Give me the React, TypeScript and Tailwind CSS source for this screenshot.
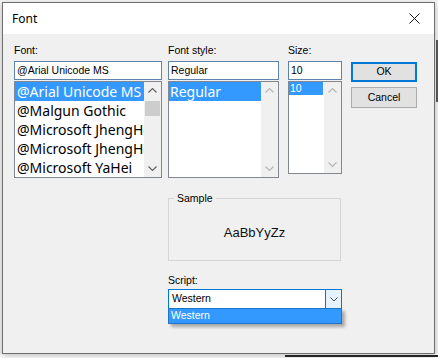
import React from "react";

const ui = "font-['Liberation_Sans',Arial,sans-serif] text-[10.5px] text-black";

function Chevron({ dir, color }: { dir: "up" | "down"; color: string }) {
  return (
    <svg width="9" height="5" viewBox="0 0 9 5">
      <path
        d={dir === "up" ? "M0.5 4.5 L4.5 0.5 L8.5 4.5" : "M0.5 0.5 L4.5 4.5 L8.5 0.5"}
        stroke={color}
        fill="none"
        strokeWidth="1.1"
      />
    </svg>
  );
}

function Scrollbar({ thumb, color }: { thumb?: boolean; color: string }) {
  return (
    <div className="w-[17px] h-full bg-[#f0f0f0] flex flex-col">
      <div className="h-[17px] flex items-center justify-center">
        <Chevron dir="up" color={color} />
      </div>
      <div className="flex-1 flex flex-col items-center">
        {thumb && <div className="w-[15px] h-[15px] mt-[2px] bg-[#cdcdcd]" />}
      </div>
      <div className="h-[17px] flex items-center justify-center">
        <Chevron dir="down" color={color} />
      </div>
    </div>
  );
}

function Edit({ value, w }: { value: string; w: string }) {
  return (
    <div
      className={`${w} h-[19px] mt-[3px] bg-white border border-[#5f83ab] flex items-center pl-[2px] ${ui} whitespace-nowrap overflow-hidden`}
    >
      {value}
    </div>
  );
}

function Label({ text }: { text: string }) {
  return <div className={`h-[15px] leading-[15px] ${ui}`}>{text}</div>;
}

const fonts = [
  "@Arial Unicode MS",
  "@Malgun Gothic",
  "@Microsoft JhengHei",
  "@Microsoft JhengHei UI",
  "@Microsoft YaHei",
];

export default function App() {
  return (
    <div className="relative w-[438px] h-[358px] bg-[#f3f3f3] pt-[2px] pl-[2px] overflow-hidden">
      {/* windows behind */}
      <div className="absolute right-0 top-[40px] w-[2px] h-[62px] bg-[#5a5a5a]" />
      <div className="absolute left-0 top-[354px] w-[438px] h-[4px] bg-white" />
      <div className="absolute left-[285px] top-[355px] w-[153px] h-[2px] bg-[#2a2a2a]" />

      <div className="relative w-[433px] h-[352px] border border-[#6f6f6f] shadow-[0_2px_6px_rgba(0,0,0,0.25)] flex flex-col bg-[#f0f0f0]">
        {/* title bar */}
        <div className="h-[31px] bg-white flex items-center justify-between pl-[9px] pr-[14px]">
          <span className="font-['Noto_Sans',sans-serif] text-[12px] text-black">Font</span>
          <svg width="11" height="11" viewBox="0 0 11 11">
            <path d="M0.5 0.5 L10.5 10.5 M10.5 0.5 L0.5 10.5" stroke="#111" strokeWidth="1" />
          </svg>
        </div>

        {/* body */}
        <div className="flex-1 flex pl-[11px] pt-[9px]">
          {/* font column */}
          <div className="w-[148px] flex flex-col">
            <Label text="Font:" />
            <Edit value="@Arial Unicode MS" w="w-[148px]" />
            <div className="mt-[1px] w-[148px] h-[97px] border border-[#828790] bg-white flex">
              <div className="flex-1 flex flex-col overflow-hidden">
                {fonts.map((f, i) => (
                  <div
                    key={f}
                    className={`h-[19px] leading-[19px] pl-[2px] whitespace-nowrap overflow-hidden font-['Noto_Sans',sans-serif] text-[14px] ${
                      i === 0 ? "bg-[#3399ff] text-white" : "text-black"
                    }`}
                  >
                    {f}
                  </div>
                ))}
              </div>
              <Scrollbar thumb color="#606060" />
            </div>
          </div>

          {/* right area */}
          <div className="ml-[6px] flex flex-col">
            <div className="flex">
              {/* font style */}
              <div className="w-[111px] flex flex-col">
                <Label text="Font style:" />
                <Edit value="Regular" w="w-[111px]" />
                <div className="mt-[1px] w-[111px] h-[97px] border border-[#828790] bg-white flex">
                  <div className="flex-1 flex flex-col">
                    <div className="h-[19px] leading-[19px] pl-[1px] bg-[#3399ff] text-white font-['Noto_Sans',sans-serif] text-[14px]">
                      Regular
                    </div>
                  </div>
                  <Scrollbar color="#b4b4b4" />
                </div>
              </div>

              {/* size */}
              <div className="ml-[9px] w-[54px] flex flex-col">
                <Label text="Size:" />
                <Edit value="10" w="w-[54px]" />
                <div className="mt-[1px] w-[54px] h-[93px] border border-[#828790] bg-white flex">
                  <div className="flex-1 flex flex-col">
                    <div className="w-[34px] h-[13px] leading-[13px] pl-[1px] bg-[#3399ff] text-white font-['Liberation_Sans',Arial,sans-serif] text-[10.5px]">
                      10
                    </div>
                  </div>
                  <Scrollbar color="#b4b4b4" />
                </div>
              </div>

              {/* buttons */}
              <div className="ml-[9px] w-[66px] flex flex-col">
                <div
                  className={`mt-[19px] h-[20px] bg-[#e1e1e1] border-2 border-[#0078d7] flex items-center justify-center ${ui}`}
                >
                  OK
                </div>
                <div
                  className={`mt-[5px] h-[21px] bg-[#e1e1e1] border border-[#adadad] flex items-center justify-center ${ui}`}
                >
                  Cancel
                </div>
              </div>
            </div>

            {/* sample */}
            <fieldset className="mt-[13px] w-[173px] h-[70px] border border-[#d5d5d5]">
              <legend className={`ml-[5px] px-[3px] h-[15px] leading-[15px] ${ui}`}>Sample</legend>
              <div className="h-[54px] flex items-center justify-center font-['Liberation_Sans',Arial,sans-serif] text-[13px] text-[#111]">
                AaBbYyZz
              </div>
            </fieldset>

            {/* script */}
            <div className="mt-[12px]">
              <Label text="Script:" />
            </div>
            <div className="relative mt-[1px] w-[174px] h-[20px] bg-white border border-[#0078d7] flex">
              <div className={`flex-1 flex items-center pl-[3px] ${ui}`}>Western</div>
              <div className="w-[16px] h-full border-l border-[#0078d7] bg-[#e5f1fb] flex items-center justify-center">
                <svg width="8" height="5" viewBox="0 0 8 5">
                  <path d="M0.5 0.5 L4 4 L7.5 0.5" stroke="#505050" fill="none" strokeWidth="1" />
                </svg>
              </div>
              <div
                className={`absolute left-[-1px] top-full w-[174px] h-[16px] bg-[#3399ff] border border-[#1f73c9] shadow-[3px_3px_3px_rgba(0,0,0,0.3)] flex items-center pl-[2px] font-['Liberation_Sans',Arial,sans-serif] text-[10.5px] text-white`}
              >
                Western
              </div>
            </div>
          </div>
        </div>
      </div>
    </div>
  );
}
